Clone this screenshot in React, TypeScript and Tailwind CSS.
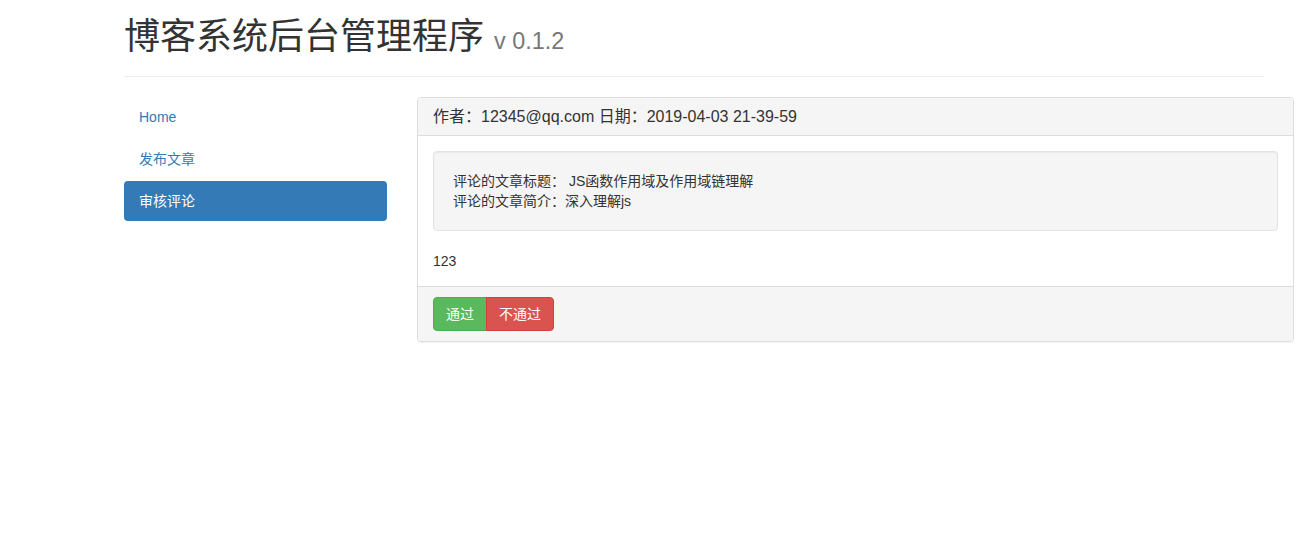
import React from 'react';

const font = { fontFamily: '"Liberation Sans", Arial, "Noto Sans CJK SC", sans-serif' };

const navItems = [
  { label: 'Home', active: false },
  { label: '发布文章', active: false },
  { label: '审核评论', active: true },
];

const App: React.FC = () => {
  return (
    <div className="min-h-[534px] bg-white text-[#333] text-[14px] leading-[20px]" style={font}>
      <div className="pl-[124px]">
        {/* Page header */}
        <div className="w-[1140px] pt-[17px] pb-[19px] border-b border-[#eee]">
          <h1 className="h-[40px] text-[36px] leading-[40px] font-normal text-[#333]">
            博客系统后台管理程序 <small className="text-[23.4px] text-[#777]">v 0.1.2</small>
          </h1>
        </div>

        <div className="flex gap-[30px] mt-[20px]">
          {/* Sidebar */}
          <ul className="w-[263px] flex flex-col gap-[2px]">
            {navItems.map((item) => (
              <li key={item.label}>
                <a
                  href="#"
                  className={
                    item.active
                      ? 'block px-[15px] py-[10px] rounded-[4px] bg-[#337ab7] text-white'
                      : 'block px-[15px] py-[10px] rounded-[4px] text-[#337ab7]'
                  }
                >
                  {item.label}
                </a>
              </li>
            ))}
          </ul>

          {/* Comment panel */}
          <div className="w-[877px] border border-[#ddd] rounded-[4px] shadow-[0_1px_1px_rgba(0,0,0,0.05)]">
            <div className="px-[15px] py-[9px] bg-[#f5f5f5] border-b border-[#ddd] rounded-t-[3px] text-[16px] leading-[19px]">
              作者：12345@qq.com 日期：2019-04-03 21-39-59
            </div>
            <div className="p-[15px]">
              <div className="bg-[#f5f5f5] border border-[#e3e3e3] rounded-[4px] p-[19px] mb-[20px] shadow-[inset_0_1px_1px_rgba(0,0,0,0.05)]">
                <p>评论的文章标题： JS函数作用域及作用域链理解</p>
                <p>评论的文章简介：深入理解js</p>
              </div>
              <p>123</p>
            </div>
            <div className="px-[15px] py-[10px] bg-[#f5f5f5] border-t border-[#ddd] rounded-b-[3px]">
              <div className="flex">
                <button className="px-[12px] py-[6px] text-white bg-[#5cb85c] border border-[#4cae4c] rounded-l-[4px]">
                  通过
                </button>
                <button className="px-[12px] py-[6px] text-white bg-[#d9534f] border border-[#d43f3a] rounded-r-[4px] -ml-px">
                  不通过
                </button>
              </div>
            </div>
          </div>
        </div>
      </div>
    </div>
  );
};

export default App;
